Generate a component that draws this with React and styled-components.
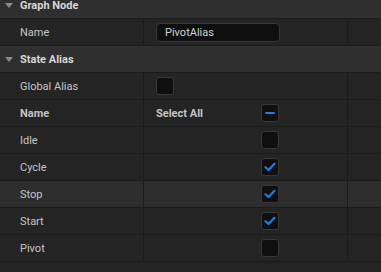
import React from 'react';
import styled, { createGlobalStyle } from 'styled-components';

const Global = createGlobalStyle`
  html, body {
    margin: 0;
    background: #232323;
    font-family: Roboto, "Noto Sans", sans-serif;
    overflow: hidden;
  }
`;

const Panel = styled.div`
  margin-top: -8px;
  width: 381px;
`;

const Header = styled.div`
  display: flex;
  align-items: center;
  height: 26px;
  background: #2f2f2f;
  border-bottom: 1px solid #1b1b1b;
  color: #d6d6d6;
  font-size: 11px;
  font-weight: 700;
`;

const Arrow = styled.span`
  width: 0;
  height: 0;
  margin: 1px 7px 0 5px;
  border-left: 4px solid transparent;
  border-right: 4px solid transparent;
  border-top: 5px solid #8a8a8a;
`;

const Row = styled.div`
  display: grid;
  grid-template-columns: 144px 204px 1fr;
  height: 26px;
  background: ${p => (p.$hover ? '#2d2d2d' : '#242424')};
  border-bottom: 1px solid #1b1b1b;
  color: #c4c4c4;
  font-size: 11px;
  font-weight: ${p => (p.$bold ? 700 : 400)};
`;

const Cell = styled.div`
  display: flex;
  align-items: center;
  border-right: ${p => (p.$last ? 'none' : '1px solid #1b1b1b')};
  padding-left: ${p => p.$pad || 0}px;
  min-width: 0;
`;

const InlineLabel = styled.span`
  width: 105px;
`;

const TextInput = styled.div`
  display: flex;
  align-items: center;
  box-sizing: border-box;
  width: 124px;
  height: 19px;
  padding-left: 8px;
  background: #0f0f0f;
  border: 1px solid #383838;
  border-radius: 4px;
  color: #cfcfcf;
`;

const Box = styled.div`
  box-sizing: border-box;
  width: 18px;
  height: 18px;
  background: #0f0f0f;
  border: 1px solid #383838;
  border-radius: 3px;
  display: flex;
  align-items: center;
  justify-content: center;
`;

const Checkbox = ({ state }) => (
  <Box>
    {state === 'checked' && (
      <svg width="12" height="10" viewBox="0 0 12 10">
        <path d="M1.5 5.2 L4.6 8 L10.5 1.8" fill="none" stroke="#1a7fe6" strokeWidth="2.2" strokeLinecap="round" strokeLinejoin="round" />
      </svg>
    )}
    {state === 'mixed' && (
      <svg width="12" height="4" viewBox="0 0 12 4">
        <rect x="1" y="1" width="10" height="2" rx="1" fill="#1a7fe6" />
      </svg>
    )}
  </Box>
);

const states = [
  { name: 'Idle', on: false },
  { name: 'Cycle', on: true },
  { name: 'Stop', on: true, hover: true },
  { name: 'Start', on: true },
  { name: 'Pivot', on: false },
];

export default function App() {
  return (
    <Panel>
      <Global />
      <Header><Arrow />Graph Node</Header>
      <Row>
        <Cell $pad={20}>Name</Cell>
        <Cell $pad={12}><TextInput>PivotAlias</TextInput></Cell>
        <Cell $last />
      </Row>
      <Header><Arrow />State Alias</Header>
      <Row>
        <Cell $pad={20}>Global Alias</Cell>
        <Cell $pad={12}><Checkbox /></Cell>
        <Cell $last />
      </Row>
      <Row $bold>
        <Cell $pad={20}>Name</Cell>
        <Cell $pad={12}><InlineLabel>Select All</InlineLabel><Checkbox state="mixed" /></Cell>
        <Cell $last />
      </Row>
      {states.map(s => (
        <Row key={s.name} $hover={s.hover}>
          <Cell $pad={20}>{s.name}</Cell>
          <Cell $pad={117}><Checkbox state={s.on ? 'checked' : undefined} /></Cell>
          <Cell $last />
        </Row>
      ))}
    </Panel>
  );
}
